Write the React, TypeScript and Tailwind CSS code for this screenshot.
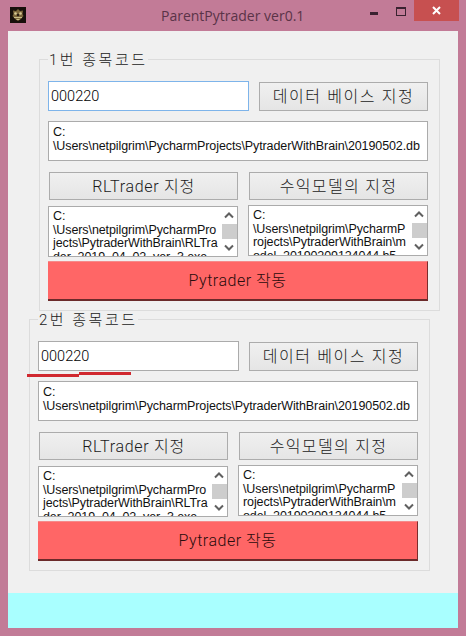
function ScrollArrow({ up }: { up?: boolean }) {
  return (
    <svg width="16" height="17" viewBox="0 0 16 17" className="shrink-0">
      <path d={up ? "M4 10.5 L8 6.5 L12 10.5" : "M4 6.5 L8 10.5 L12 6.5"} fill="none" stroke="#606060" strokeWidth="2" />
    </svg>
  );
}

function PathArea({ lines, className }: { lines: string[]; className: string }) {
  return (
    <div className={`flex h-[51px] overflow-hidden border border-[#ababab] bg-white ${className}`}>
      <div className="min-w-0 flex-1 overflow-hidden pt-[3px] pl-[4px] text-[12.5px] leading-[13.5px] tracking-[-0.1px] whitespace-nowrap text-[#111]">
        {lines.map((l) => (
          <div key={l}>{l}</div>
        ))}
      </div>
      <div className="flex w-[16px] shrink-0 flex-col bg-white">
        <ScrollArrow up />
        <div className="h-[15px] w-[15px] shrink-0 self-end bg-[#cdcdcd]" />
        <ScrollArrow />
      </div>
    </div>
  );
}

function Btn({ label, className }: { label: string; className: string }) {
  return (
    <button className={`flex items-center justify-center border border-[#acacac] bg-gradient-to-b from-[#f0f0f0] to-[#e5e5e5] pt-[1px] font-['Roboto','Noto_Sans_CJK_KR',sans-serif] text-[16px] font-light text-[#1a1a1a] ${className}`}>
      {label}
    </button>
  );
}

function Group({ title, className, inputClass }: { title: string; className: string; inputClass: string }) {
  return (
    <section className={`relative h-[252px] w-[401px] shrink-0 border border-[#dcdcdc] px-[8px] pt-[21px] ${className}`}>
      <div className="absolute -top-[9px] left-[8px] bg-[#f0f0f0] px-[1px] font-['Roboto','Noto_Sans_CJK_KR',sans-serif] text-[15px] leading-[18px] font-light tracking-[2.5px] text-[#1a1a1a]">
        {title}
      </div>
      <div className="flex items-start gap-[10px]">
        <div className={`flex h-[30px] w-[201px] items-center bg-white pt-[1px] pl-[2px] font-['Roboto',sans-serif] text-[14.5px] font-light text-black ${inputClass}`}>000220</div>
        <Btn label="데이터 베이스 지정" className="mt-[1px] h-[29px] w-[169px] tracking-[1.6px]" />
      </div>
      <div className="mt-[10px] h-[40px] w-[380px] border border-[#ababab] bg-white pt-[4px] pl-[4px] text-[12.5px] leading-[13.5px] tracking-[-0.1px] text-[#111]">
        <div>C:</div>
        <div>\Users\netpilgrim\PycharmProjects\PytraderWithBrain\20190502.db</div>
      </div>
      <div className="mt-[11px] flex gap-[11px] pl-[1px]">
        <Btn label="RLTrader 지정" className="h-[28px] w-[189px] tracking-[0.7px]" />
        <Btn label="수익모델의 지정" className="h-[28px] w-[179px] tracking-[1.3px]" />
      </div>
      <div className="mt-[5px] flex items-start gap-[10px]">
        <PathArea
          className="mt-[1px] w-[190px]"
          lines={["C:", "\\Users\\netpilgrim\\PycharmPro", "jects\\PytraderWithBrain\\RLTra", "der_2019_04_02_ver_3.exe"]}
        />
        <PathArea
          className="w-[180px]"
          lines={["C:", "\\Users\\netpilgrim\\PycharmP", "rojects\\PytraderWithBrain\\m", "odel_20190209124044.h5"]}
        />
      </div>
      <button className="mt-[4px] flex h-[40px] w-[380px] items-center justify-center border-t border-r border-b-2 border-t-[#f58a8a] border-r-[#7a2c2c] border-b-[#6b2a2a] bg-[#ff6666] pt-[1px] font-['Roboto','Noto_Sans_CJK_KR',sans-serif] text-[16px] font-light tracking-[0.5px] text-[#2a0c0c]">
        Pytrader 작동
      </button>
    </section>
  );
}

export default function App() {
  return (
    <div className="relative flex h-[636px] w-[466px] flex-col overflow-hidden bg-[#c27b97] px-[8px] pb-[8px] font-['Liberation_Sans','Noto_Sans_CJK_KR',sans-serif]">
      <header className="relative -mx-[8px] flex h-[31px] shrink-0 items-start">
        <svg width="16" height="16" viewBox="0 0 16 16" className="mt-[7px] ml-[10px] shrink-0">
          <rect width="16" height="16" fill="#17100b" />
          <path d="M8 2 L10 4 L13 3.5 L12.5 7 L13.5 9 L11 12 L8 14 L5 12 L2.5 9 L3.5 7 L3 3.5 L6 4 Z" fill="#7c673a" />
          <circle cx="5.5" cy="6.5" r="1.3" fill="#d8cc96" />
          <circle cx="10.5" cy="6.5" r="1.3" fill="#d8cc96" />
          <circle cx="8" cy="8" r="1.2" fill="#2a1e14" />
          <path d="M4 10.5 H12 M6.5 12.5 H9.5" stroke="#c9bd88" strokeWidth="1" />
        </svg>
        <div className="absolute top-[6px] left-[161px] font-['Open_Sans',sans-serif] text-[14px] leading-[19px] whitespace-nowrap text-[#5a3348]">
          ParentPytrader ver0.1
        </div>
        <div className="ml-auto flex items-start">
          <div className="mt-[12px] mr-[18px] h-[3px] w-[8px] bg-[#3a2230]" />
          <div className="mt-[7px] mr-[8px] h-[9px] w-[10px] border border-t-2 border-[#3a2230]" />
          <div className="mr-[7px] flex h-[21px] w-[45px] items-center justify-center bg-[#c75050]">
            <svg width="9" height="9" viewBox="0 0 9 9">
              <path d="M1 1 L8 8 M8 1 L1 8" stroke="#fff" strokeWidth="2" />
            </svg>
          </div>
        </div>
      </header>
      <main className="flex min-h-0 flex-1 flex-col bg-[#f0f0f0]">
        <Group title="1번 종목코드" className="mt-[28px] ml-[31px]" inputClass="border border-[#7eb4ea]" />
        <Group title="2번 종목코드" className="mt-[8px] ml-[21px]" inputClass="border border-[#ababab]" />
        <div className="mt-auto h-[35px] shrink-0 bg-[#a9ffff]" />
      </main>
      <div className="absolute top-[374px] left-[27px] h-[3px] w-[52px] bg-[#d0282f]" />
      <div className="absolute top-[372px] left-[79px] h-[3px] w-[52px] bg-[#d0282f]" />
    </div>
  );
}
